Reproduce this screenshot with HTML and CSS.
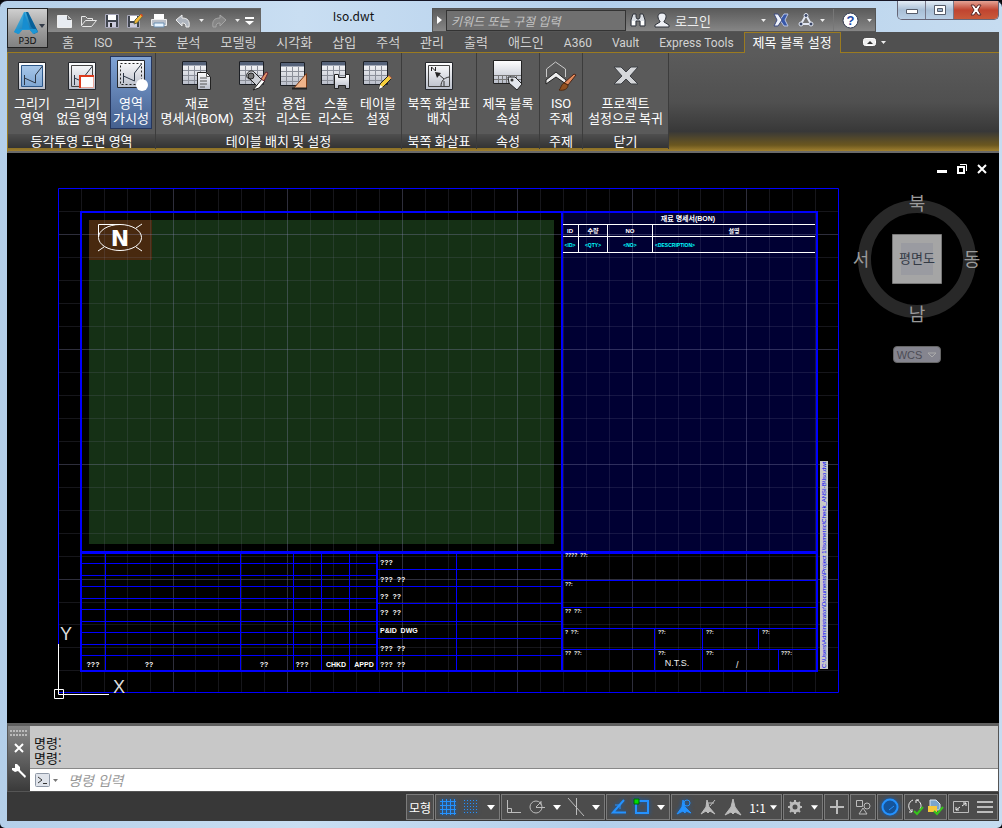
FILE: index.html
```html
<!DOCTYPE html>
<html lang="ko">
<head>
<meta charset="utf-8">
<title>Iso.dwt</title>
<link rel="stylesheet" href="styles.css">
</head>
<body>
<svg class="defs" aria-hidden="true">
  <defs>
    <linearGradient id="paper" x1="0" y1="0" x2="0" y2="1"><stop offset="0" stop-color="#fff"/><stop offset="1" stop-color="#b8bdc9"/></linearGradient>
    <linearGradient id="sky" x1="0" y1="0" x2="0" y2="1"><stop offset="0" stop-color="#a8c8ea"/><stop offset="1" stop-color="#7fa6d2"/></linearGradient>
    <linearGradient id="logo" x1="0" y1="0" x2="1" y2="1"><stop offset="0" stop-color="#4cc4f2"/><stop offset="1" stop-color="#075a96"/></linearGradient>
    <symbol id="grid-table" viewBox="0 0 32 32">
      <path d="M3.500 2.500h24v23h-24z" fill="url(#paper)" stroke="#1c1f24"/>
      <path d="M4 3h23v3.500H4z" fill="#56637a"/>
      <path d="M4 11.500h23M4 16.500h23M4 21.500h23M9.500 7v18M15.500 7v18M21.500 7v18" stroke="#8b8f99" fill="none"/>
    </symbol>
    <symbol id="sheet" viewBox="0 0 32 32">
      <path d="M2.500 2.500h27v27h-27z" fill="url(#paper)" stroke="#24272c"/>
    </symbol>
    <symbol id="caret" viewBox="0 0 8 5"><path d="M0 0h8L4 5z" fill="currentColor"/></symbol>
  </defs>
</svg>
<div class="window">
  <header class="header">
    <button class="app-button" aria-label="P3D">
      <svg width="36" height="26" viewBox="0 0 36 26"><path d="M14 2h4l10 20-4 2-4-4h-8l-4 4-4-2z" fill="url(#logo)"/><path d="M14 2l-2 17h8z" fill="#168dd0"/><path d="M16 2l2 0 10 20-7-5z" fill="#086099"/><path d="M4 22l2-3h20l2 3-5 2-3-4h-8l-3 4z" fill="#1c96d6"/><path d="M29 14h6l-3 4z" fill="#333b48"/></svg>
      <span>P3D</span>
    </button>
    <div class="title-row">
      <div class="quick-bar">
        <button aria-label="새로 만들기"><svg width="18" height="16" viewBox="0 0 18 16"><path d="M1.500 2.500h10l4 4v8h-14z" fill="#e8ecf2" stroke="#eee"/><path d="M11.500 2.500v4h4" fill="#aaa" stroke="#666"/></svg></button>
        <button aria-label="열기"><svg width="18" height="16" viewBox="0 0 18 16"><path d="M1.500 12.500v-9h4l2 2h5v2M1.500 12.500l4-5h11l-5 6h-9z" fill="#777" stroke="#e8e8e8"/></svg></button>
        <button aria-label="저장"><svg width="16" height="16" viewBox="0 0 16 16"><path d="M1.500 1.500h13v13h-13z" fill="#40454f" stroke="#aab"/><path d="M4 2h8v5H4z" fill="#fff"/><path d="M4 9h8v5H4z" fill="#ccd"/><path d="M6 10h2v4H6z" fill="#222"/></svg></button>
        <button aria-label="다른 이름으로 저장"><svg width="18" height="16" viewBox="0 0 18 16"><path d="M1.500 2.500h12v12h-12z" fill="#40454f" stroke="#aab"/><path d="M4 3h7v5H4z" fill="#fff"/><path d="M4 10h7v4H4z" fill="#ccd"/><path d="M8 11l1-4 6-6 2 2-6 7z" fill="#f3b636" stroke="#664"/><path d="M14 1l2 0 1 2-1 1z" fill="#d54b20"/></svg></button>
        <button aria-label="플롯"><svg width="18" height="16" viewBox="0 0 18 16"><path d="M4 1h10v6H4z" fill="#fff"/><path d="M1.500 6.500h15v6h-15z" fill="#b9bfc9" stroke="#eee"/><path d="M4 10h10v4H4z" fill="#e8f4ff" stroke="#6b8fb2"/></svg></button>
        <button aria-label="명령 취소"><svg width="18" height="16" viewBox="0 0 18 16"><path d="M2 7l6-5v3c6 0 8 3 7 9h-3c0-3-1-4-4-4v3z" fill="#aeb4bd" stroke="#eee"/></svg></button>
        <button class="mini" aria-label="취소 목록"><svg width="5" height="3"><use href="#caret"/></svg></button>
        <button aria-label="명령 복구"><svg width="18" height="16" viewBox="0 0 18 16"><path d="M16 7l-6-5v3C4 5 2 8 3 14h3c0-3 1-4 4-4v3z" fill="#858585" stroke="#a5a5a5"/></svg></button>
        <button class="mini" aria-label="복구 목록"><svg width="5" height="3"><use href="#caret"/></svg></button>
        <button class="mini" aria-label="빠른 실행 사용자화"><svg width="9" height="8"><path d="M0 1h9" stroke="#fff" stroke-width="2"/><path d="M0 4h9L4.500 8z" fill="#fff"/></svg></button>
      </div>
      <h1 class="doc-title">Iso.dwt</h1>
      <div class="info-center">
        <button class="info-arrow" aria-label="축소"><svg width="5" height="8"><path d="M0 0l5 4-5 4z" fill="#fff"/></svg></button>
        <input class="search" type="text" aria-label="검색" placeholder="키워드 또는 구절 입력">
        <button aria-label="찾기"><svg width="16" height="16" viewBox="0 0 16 16"><path d="M3 2h3v3l1 2h2l1-2V2h3l2 6v6h-5V9H6v5H1V8z" fill="#d9dde3" stroke="#30343c"/><path d="M2 9h3v4H2zM11 9h3v4h-3z" fill="#fff"/></svg></button>
        <button class="login"><svg width="16" height="16" viewBox="0 0 16 16"><path d="M8 1c6 0 4 7 2 8v1l5 3v2H1v-2l5-3V9C4 8 2 1 8 1z" fill="#eef0f5" stroke="#30343c"/></svg><span>로그인</span><svg width="5" height="3"><use href="#caret"/></svg></button>
        <button aria-label="Exchange"><svg width="16" height="14" viewBox="0 0 16 14"><path d="M15 1h-4L7 7l4 6h4l-3-6z" fill="#3858a8" stroke="#b9c4e5"/><path d="M1 1h4l4 6-4 6H1l3-6z" fill="#eef2fb" stroke="#3c4a80"/></svg></button>
        <button class="share" aria-label="연결"><svg width="16" height="16" viewBox="0 0 16 16"><path d="M8 3L3 12h10z" fill="none" stroke="#e2e7f2" stroke-width="2"/><g fill="#3a4666" stroke="#e2e7f2"><circle cx="8" cy="3.500" r="2"/><circle cx="3" cy="12" r="2"/><circle cx="13" cy="12" r="2"/></g></svg><svg width="5" height="3"><use href="#caret"/></svg></button>
        <button class="help" aria-label="도움말"><svg width="17" height="17" viewBox="0 0 17 17"><circle cx="8.500" cy="8.500" r="7.500" fill="#fff" stroke="#333b50"/><text x="8.500" y="13" text-anchor="middle" class="help-mark">?</text></svg><svg width="5" height="3"><use href="#caret"/></svg></button>
      </div>
      <div class="window-buttons">
        <button aria-label="최소화"><svg width="14" height="12"><path d="M1.500 5.500h11v4h-11z" fill="#fff" stroke="#555c6a"/></svg></button>
        <button aria-label="최대화"><svg width="14" height="12"><path d="M1.500 1.500h11v9h-11z" fill="#fff" stroke="#555c6a"/><path d="M4.500 4.500h5v3h-5z" fill="#9cb3cc" stroke="#555c6a"/></svg></button>
        <button class="close" aria-label="닫기"><svg width="14" height="12"><path d="M2 1h3l2 3 2-3h3L9 6l3 5H9L7 8l-2 3H2l3-5z" fill="#fff" stroke="#5b2a2a"/></svg></button>
      </div>
    </div>
    <nav class="tabs">
      <a href="#">홈</a><a href="#" lang="en">ISO</a><a href="#">구조</a><a href="#">분석</a><a href="#">모델링</a><a href="#">시각화</a><a href="#">삽입</a><a href="#">주석</a><a href="#">관리</a><a href="#">출력</a><a href="#">애드인</a><a href="#" lang="en">A360</a><a href="#" lang="en">Vault</a><a href="#" lang="en">Express Tools</a><a href="#" class="active">제목 블록 설정</a>
      <button class="tab-menu" aria-label="리본 최소화"><svg width="24" height="9" viewBox="0 0 24 9"><rect x=".5" y=".5" width="12" height="7" rx="2" fill="#eee" stroke="#fff"/><path d="M4 6h6L7 3z" fill="#333"/><path d="M18 3h5l-2.500 3z" fill="#eee"/></svg></button>
    </nav>
  </header>

  <section class="ribbon">
    <div class="panel panel-area">
      <div class="tools">
        <button class="tool"><svg width="32" height="32"><use href="#sheet"/><path d="M5.500 5.500h21v21h-21z" fill="url(#sky)" stroke="#2c5788"/><path d="M8.500 15v10M8.500 18l11 5v-8l7-9" fill="none" stroke="#2d3745"/></svg><span>그리기<br>영역</span></button>
        <button class="tool"><svg width="32" height="32"><use href="#sheet"/><path d="M5.500 5.500h21v21h-21z" fill="none" stroke="#444"/><path d="M8.500 15v10M8.500 18l11 5v-8l7-9" fill="none" stroke="#2d3745"/><path d="M14.500 16.500h13v11h-13z" fill="#fff" stroke="#e9a79b"/><path d="M14 28V16h14" fill="none" stroke="#dd3a1c" stroke-width="2"/></svg><span>그리기<br>없음 영역</span></button>
        <button class="tool selected"><svg width="32" height="32"><path d="M2.500 .500h27v27h-27z" fill="url(#paper)" stroke="#24272c"/><path d="M5.500 3.500h21v21h-21z" fill="none" stroke="#222" stroke-dasharray="2 2"/><path d="M8.500 13v10M8.500 16l11 5v-8l7-9" fill="none" stroke="#2d3745"/><circle cx="27" cy="25" r="6" fill="#fff"/></svg><span>영역<br>가시성</span></button>
      </div>
      <h2>등각투영 도면 영역</h2>
    </div>
    <div class="panel panel-table">
      <div class="tools">
        <button class="tool"><svg width="32" height="32"><use href="#grid-table" x="-2" y="-1"/><path d="M16.500 12.500h9l4 4v13h-13z" fill="url(#paper)" stroke="#222"/><path d="M25.500 12.500v4h4M19 18h7M19 21h7M19 24h7M19 27h5" fill="none" stroke="#555"/></svg><span>재료<br>명세서(BOM)</span></button>
        <button class="tool"><svg width="32" height="32"><use href="#grid-table" x="-2" y="-1"/><path d="M9 14c2-4 6-4 8-1l7 7-5 6-7-7c-3 0-4-3-3-5z" fill="#cdd0d6" stroke="#222"/><circle cx="13" cy="16" r="3" fill="#777" stroke="#222"/><path d="M15 30l9-11 3 2-6 7z" fill="#fff" stroke="#222"/><path d="M23 19l5-7 2 1-4 8z" fill="#e09468" stroke="#623"/></svg><span>절단<br>조각</span></button>
        <button class="tool"><svg width="32" height="32"><use href="#grid-table" x="-1"/><path d="M15.500 28.500l13-15v15z" fill="#f0b48a" stroke="#7b3b16"/><path d="M14 28.500h15" stroke="#222" stroke-width="2"/></svg><span>용접<br>리스트</span></button>
        <button class="tool"><svg width="32" height="32"><use href="#grid-table" x="-2" y="-1"/><path d="M14.500 14.500h4v3h7v-3h4v14h-4v-3h-7v3h-4z" fill="url(#paper)" stroke="#222"/></svg><span>스풀<br>리스트</span></button>
        <button class="tool"><svg width="32" height="32"><use href="#grid-table" x="-2" y="-1"/><path d="M17 29l1-5 9-9 3 3-9 9z" fill="#f5cf3d" stroke="#222"/><path d="M17 29l1-4 3 2z" fill="#fff"/><path d="M26 16l1-1 3 3-1 1z" fill="#d98561"/></svg><span>테이블<br>설정</span></button>
      </div>
      <h2>테이블 배치 및 설정</h2>
    </div>
    <div class="panel panel-north">
      <div class="tools"><button class="tool"><svg width="32" height="32"><use href="#sheet"/><path d="M5.500 5.500h21v21h-21z" fill="none" stroke="#444"/><path d="M8.500 11V7l4 4V7" fill="none" stroke="#222"/><path d="M21 19l-7-6M18 26c0-5 3-8 8-9M21 26v-5" fill="none" stroke="#333"/><path d="M12 12l6 1-4 5z" fill="#222"/></svg><span>북쪽 화살표<br>배치</span></button></div>
      <h2>북쪽 화살표</h2>
    </div>
    <div class="panel panel-title">
      <div class="tools"><button class="tool"><svg width="32" height="32"><path d="M1.500 .500h28v23h-28z" fill="url(#paper)" stroke="#222"/><path d="M2 15.500h27M2 19.500h27M6.500 15v8M10.500 15v8M14.500 15v8M18.500 15v8M24.500 15v8" stroke="#777"/><path d="M16 17l7 0 7 7-5 6-8-7z" fill="#e3e6ec" stroke="#222"/><circle cx="20" cy="20" r="1.500" fill="#333"/></svg><span>제목 블록<br>속성</span></button></div>
      <h2>속성</h2>
    </div>
    <div class="panel panel-iso">
      <div class="tools"><button class="tool"><svg width="32" height="32"><path d="M1.500 17V9l9-7 10 7v8" fill="none" stroke="#c9c9c9"/><path d="M1 20l10-8 10 8v4l-10-7L1 24z" fill="#eee" stroke="#222"/><path d="M19 23L29 14l2 1-8 10z" fill="#e28a5b" stroke="#4a2416"/><path d="M14 30c2-1 2-6 5-7l4 2c0 4-4 6-9 5z" fill="#91501f" stroke="#502a10"/></svg><span>ISO<br>주제</span></button></div>
      <h2>주제</h2>
    </div>
    <div class="panel panel-close">
      <div class="tools"><button class="tool"><svg width="32" height="32"><path d="M4 7h7l5 5 5-5h7l-8 9 8 8h-7l-5-5-5 5H4l8-8z" fill="#d5d7da" stroke="#3d4045"/></svg><span>프로젝트<br>설정으로 복귀</span></button></div>
      <h2>닫기</h2>
    </div>
  </section>

  <main class="canvas">
    <svg class="drawing" viewBox="7 153 992 570" preserveAspectRatio="xMinYMin meet" role="img" aria-label="제목 블록 도면">
      <path class="navy" d="M562 212h255v340H562z"/>
      <path class="green" d="M89 220h465v324H89z"/>
      <path class="brown" d="M89 220h63v40H89z"/>
      <path class="grid-minor" d="M81.500 188v505M104.500 188v505M127.500 188v505M150.500 188v505M195.500 188v505M218.500 188v505M241.500 188v505M264.500 188v505M310.500 188v505M333.500 188v505M356.500 188v505M379.500 188v505M425.500 188v505M448.500 188v505M471.500 188v505M494.500 188v505M540.500 188v505M563.500 188v505M586.500 188v505M609.500 188v505M655.500 188v505M678.500 188v505M700.500 188v505M723.500 188v505M769.500 188v505M792.500 188v505M815.500 188v505M58 211.500h780M58 257.500h780M58 280.500h780M58 303.500h780M58 326.500h780M58 372.500h780M58 395.500h780M58 418.500h780M58 441.500h780M58 487.500h780M58 510.500h780M58 533.500h780M58 556.500h780M58 602.500h780M58 624.500h780M58 647.500h780M58 670.500h780"/>
      <path class="grid-major" d="M173.500 188v505M287.500 188v505M402.500 188v505M517.500 188v505M632.500 188v505M746.500 188v505M58 234.500h780M58 349.500h780M58 464.500h780M58 579.500h780"/>
      <path class="blue-line" d="M58.500 188.500h780v504h-780zM105.500 553v117M293.500 553v117M321.500 553v117M349.500 553v117M456.500 553v117M81 563.500h296M81 575.500h296M81 586.500h296M81 609.500h296M81 621.500h296M81 644.500h296M81 655.500h296M377 569.500h185M377 586.500h185M377 603.500h185M377 621.500h185M377 638.500h185M377 655.500h185M563 607.500h253M563 628.500h253M563 649.500h253M654.500 628v42M702.500 628v42M758.500 628v21M778.500 649v21M240.500 553v117M81 598.500h296M81 632.500h296M563 580.500h253"/>
      <path class="blue-thick" d="M81 212h736v459H81zM562 212v459M377 553v118"/>
      <path class="blue-heavy" d="M81 552.500h736"/>
      <path class="white-line" d="M563 224.500h252M563 236.500h252M563 252.500h252M578.500 224v28M607.500 224v28M652.500 224v28"/>
      <g class="north"><ellipse cx="120" cy="237.500" rx="21.500" ry="13"/><path d="M98.500 237v-12.500h22M142 224l-6 4M98 251l6-4M142 251l-6-4"/><text x="120" y="246" text-anchor="middle">N</text></g>
      <g class="bom-text" text-anchor="middle">
        <text class="bom-title" x="688" y="221">재료 명세서(BON)</text>
        <text x="570" y="233">ID</text><text x="593" y="233">수량</text><text x="630" y="233">NO</text><text x="734" y="233">설명</text>
        <g class="cyan"><text x="570" y="247">&lt;ID&gt;</text><text x="593" y="247">&lt;QTY&gt;</text><text x="630" y="247">&lt;NO&gt;</text><text x="675" y="247">&lt;DESCRIPTION&gt;</text></g>
      </g>
      <g class="cell-text">
        <g text-anchor="middle"><text x="93" y="667">???</text><text x="149" y="667">??</text><text x="264" y="667">??</text><text x="302" y="667">???</text><text x="336" y="667">CHKD</text><text x="364" y="667">APPD</text></g>
        <text x="380" y="565">???</text><text x="380" y="582">??? &#160;??</text><text x="380" y="599">?? &#160;??</text><text x="380" y="615">?? &#160;??</text><text x="380" y="633">P&amp;ID &#160;DWG</text><text x="380" y="651">??? &#160;??</text><text x="380" y="667">??? &#160;??</text>
      </g>
      <g class="tiny-text">
        <text x="565" y="557">???? &#160;??:</text><text x="565" y="586">??:</text><text x="565" y="613">?? &#160;??:</text><text x="565" y="634">? &#160;??:</text><text x="565" y="655">?? &#160;??:</text>
        <text x="658" y="634">??:</text><text x="706" y="634">??:</text><text x="762" y="634">??:</text><text x="658" y="655">??:</text><text x="706" y="655">??:</text><text x="781" y="655">???:</text>
      </g>
      <text class="scale-text" x="677" y="666" text-anchor="middle">N.T.S.</text><text class="scale-text" x="736" y="668">/</text>
      <path d="M820 461h8v208h-8z" fill="#c8c8c8"/>
      <text class="path-text" transform="translate(826 668) rotate(-90)">C:\Users\Administrator\Documents\Project 1\Isometric\Check_ANSI-B\Iso.dwt</text>
      <path class="ucs" d="M58.500 644v50.500h50.500M54.500 689.500h9v9h-9z"/>
      <text class="ucs-text" x="66" y="640" text-anchor="middle">Y</text><text class="ucs-text" x="119" y="693" text-anchor="middle">X</text>
    </svg>
    <div class="doc-buttons">
      <button aria-label="도면 최소화"><svg width="10" height="10"><path d="M0 6h10v3H0z" fill="#fff"/></svg></button>
      <button aria-label="도면 복원"><svg width="10" height="10"><path d="M3 .500h6.500V7" fill="none" stroke="#fff"/><path d="M1 3h6v6H1z" fill="none" stroke="#fff" stroke-width="2"/></svg></button>
      <button aria-label="도면 닫기"><svg width="10" height="10"><path d="M1 1l8 8M9 1l-8 8" stroke="#fff" stroke-width="2"/></svg></button>
    </div>
    <div class="view-cube">
      <svg width="130" height="134" viewBox="0 0 130 134">
        <circle cx="65" cy="67" r="52.500" fill="none" stroke="#282828" stroke-width="13"/>
        <path d="M40.500 42.500h49v49h-49z" fill="#a5a5a5" stroke="#777"/><path d="M49 51h32v32H49z" fill="#9a9ba1"/>
        <g text-anchor="middle"><text class="cube-face" x="65" y="71">평면도</text><g class="compass-text"><text x="65" y="18">북</text><text x="65" y="129">남</text><text x="9" y="74">서</text><text x="120" y="74">동</text></g></g>
      </svg>
      <button class="wcs">WCS<svg width="10" height="6"><path d="M1 1h8L5 5z" fill="none" stroke="#aaa"/></svg></button>
    </div>
  </main>

  <section class="command">
    <div class="command-grip">
      <svg width="18" height="6"><path d="M0 1h18M0 5h18" stroke="#bbb" stroke-width="2" stroke-dasharray="2 1"/></svg>
      <button aria-label="명령행 닫기"><svg width="10" height="10"><path d="M1 1l8 8M9 1l-8 8" stroke="#fff" stroke-width="2"/></svg></button>
      <button class="wrench" aria-label="사용자화"><svg width="16" height="16" viewBox="0 0 16 16"><path d="M4 1l0 4-3 0 0 2 3 2 3-1 7 7 1-2-6-6 0-3-3-3z" fill="#fff"/></svg></button>
    </div>
    <div class="command-main">
      <p class="history">명령:<br>명령:</p>
      <div class="prompt">
        <button aria-label="최근 명령"><svg width="23" height="16" viewBox="0 0 23 16"><rect x=".5" y="1.500" width="14" height="13" rx="1" fill="#dfe3ea" stroke="#8f98a6"/><path d="M3 5l4 3-4 3M8 11.500h4" fill="none" stroke="#333"/><path d="M18 7h5l-2.500 3z" fill="#777"/></svg></button>
        <input type="text" aria-label="명령" placeholder="명령 입력">
      </div>
    </div>
  </section>

  <footer class="status">
    <div class="group g-model"><button>모형</button></div>
    <div class="group g-grid">
      <button class="on" aria-label="그리드"><svg width="16" height="16"><path d="M0 2.500h16M0 6.500h16M0 10.500h16M0 14.500h16M2.500 0v16M6.500 0v16M10.500 0v16M14.500 0v16"/></svg></button>
      <button class="on" aria-label="스냅"><svg width="16" height="16"><path d="M1 1.500h15M1 4.500h15M1 7.500h15M1 10.500h15M1 13.500h15" stroke-dasharray="1 2"/></svg></button>
      <button aria-label="스냅 메뉴"><svg width="8" height="5"><use href="#caret"/></svg></button>
    </div>
    <div class="group g-track">
      <button aria-label="직교"><svg width="16" height="16"><path d="M1.500 1v12.500H15M1.500 9.500h4v4" /></svg></button>
      <button aria-label="극좌표"><svg width="16" height="16"><circle cx="7" cy="8" r="6"/><path d="M7 8.500h9M7 8l5-5M12 2v4"/></svg></button>
      <button aria-label="극좌표 메뉴"><svg width="8" height="5"><use href="#caret"/></svg></button>
      <button aria-label="등각투영"><svg width="18" height="20"><path d="M9.500 1v17M1 1l16 18"/></svg></button>
      <button aria-label="등각투영 메뉴"><svg width="8" height="5"><use href="#caret"/></svg></button>
    </div>
    <div class="group g-osnap">
      <button class="on" aria-label="객체 스냅 추적"><svg width="17" height="16"><path d="M14 1L3 13.500h13" stroke-width="2"/><path d="M5 6h5v4"/></svg></button>
      <button class="on" aria-label="객체 스냅"><svg width="18" height="18"><path d="M3 3h12v12H3z" stroke-width="2"/><path d="M1 1h5v5H1z" fill="#0d0" stroke="#060"/></svg></button>
      <button aria-label="객체 스냅 메뉴"><svg width="8" height="5"><use href="#caret"/></svg></button>
    </div>
    <div class="group g-anno">
      <button class="on" aria-label="주석 가시성"><svg width="18" height="18"><path class="solid" d="M8 2l2 7 6 6-5-2-1 2-2-2-6 3 5-7z"/><circle cx="12" cy="5" r="3"/></svg></button>
      <button aria-label="자동 축척"><svg width="18" height="18"><path class="solid" d="M8 2l2 7 6 7-5-3-2 2-2-2-5 3 5-7z"/><path d="M9 5h6M11 8l5-6"/></svg></button>
      <button aria-label="주석 축척"><svg width="18" height="18"><path class="solid" d="M9 1l2 8 6 8-6-3-2 2-2-2-6 3 6-8z"/></svg></button>
      <button class="scale">1:1 <svg width="7" height="5"><use href="#caret"/></svg></button>
    </div>
    <div class="group g-gear">
      <button aria-label="작업공간"><svg width="16" height="16"><circle cx="8" cy="8" r="4" stroke-width="3"/><path d="M8 1v3M8 12v3M1 8h3M12 8h3M3 3l2 2M11 11l2 2M13 3l-2 2M5 11l-2 2" stroke-width="2"/></svg></button>
      <button aria-label="작업공간 메뉴"><svg width="7" height="5"><use href="#caret"/></svg></button>
    </div>
    <div class="group g-plus"><button aria-label="주석 감시"><svg width="16" height="16"><path d="M8 1v14M1 8h14" stroke-width="2"/></svg></button></div>
    <div class="group g-shapes"><button aria-label="객체 분리"><svg width="16" height="18"><path d="M1.500 2.500h6v6h-6zM4 16h8l-4-6z"/><circle cx="12" cy="8" r="3"/></svg></button></div>
    <div class="group g-perf"><button class="on" aria-label="하드웨어 가속"><svg width="18" height="18"><circle cx="9" cy="9" r="7.500" fill="#14549b" stroke-width="2"/><path d="M8 12l5-4"/></svg></button></div>
    <div class="group g-sync">
      <button aria-label="동기화"><svg width="17" height="18"><path d="M6 2C1 4 0 10 5 14M10 2c4 2 5 6 3 9M5 11v3H2M9 5V2h3" stroke="#eee"/><path d="M7 13l3 3 6-7" stroke="#36c51c" stroke-width="2"/></svg></button>
      <button aria-label="프로젝트"><svg width="17" height="18"><path d="M3 2h6l4 4v6H3z" fill="#7aa5cc" stroke="#d7e5f2"/><path d="M1 8h9v6H1z" fill="#f5c83c" stroke="none"/><path d="M7 13l3 3 6-7" stroke="#36c51c" stroke-width="2"/></svg></button>
    </div>
    <div class="group g-full">
      <button aria-label="화면 정리"><svg width="16" height="14"><path d="M.500 1.500h15v11H.500z" stroke-width="1"/><path d="M3 10l4-3M9 6l4-3M3 7v3h3M10 3h3v3" stroke="#eee"/></svg></button>
      <button aria-label="사용자화 메뉴 열기"><svg width="16" height="14"><path d="M0 2h16M0 7h16M0 12h16" stroke-width="2"/></svg></button>
    </div>
  </footer>
</div>
</body>
</html>
```
FILE: styles.css
```css
* { box-sizing: border-box; }
body { margin: 0; background: #08080c; font: 12px/15px "Noto Sans CJK KR", "Noto Sans", sans-serif; color: #eee; }
button { font: inherit; color: inherit; background: none; border: 0; padding: 0; margin: 0; display: flex; align-items: center; justify-content: center; }
h1, h2, p { margin: 0; font: inherit; }
svg { display: block; flex: none; overflow: visible; }
input { border: 0; font: inherit; min-width: 0; outline: 0; }
.defs { position: absolute; width: 0; height: 0; }

.window { display: flex; flex-direction: column; height: 100vh; min-height: 480px; padding: 0 3px 7px 7px; background: linear-gradient(90deg, #b4cfe9, #c9def2 30%, #b3cfeb 60%, #c6dcf0); border-top: 1px solid #151525; border-radius: 7px 7px 5px 5px; }

.header { display: grid; grid-template-columns: 41px 1fr; grid-template-rows: 31px 20px; flex: none; background: linear-gradient(transparent 31px, #505050 31px); }
.app-button { grid-row: 1 / 3; margin-top: 7px; height: 40px; flex-direction: column; background: linear-gradient(#cfcfcf, #999 60%, #828282); border: 1px solid #222; color: #111; font: 9px/10px "DejaVu Sans", sans-serif; }
.title-row { display: flex; min-width: 0; }
.quick-bar { display: flex; align-items: center; gap: 6px; width: 213px; margin-top: 7px; padding-left: 8px; background: linear-gradient(#5b5b5b, #8a8a8a); border: 1px solid #666; border-left: 0; border-bottom: 0; }
.quick-bar .mini { width: 6px; }
.doc-title { flex: 1; padding: 7px 0 0 14px; color: #111; text-align: center; line-height: 16px; }
.info-center { display: flex; align-items: center; width: 444px; margin-top: 7px; background: linear-gradient(#5b5b5b, #868686); border: 1px solid #555; }
.info-center > button { width: 24px; height: 100%; }
.info-center .info-arrow { width: 13px; }
.search { width: 180px; height: 21px; padding: 0 4px; background: #707070; border: 1px solid #333; color: #eee; font-style: italic; }
.search::placeholder { color: #c4c4c4; opacity: 1; }
.info-center .login { width: 119px; justify-content: flex-start; gap: 5px; padding: 0 3px 0 4px; font-size: 13px; }
.login span { flex: 1; text-align: left; }
.info-center .share { width: 36px; gap: 6px; margin-right: 4px; }
.info-center .help { flex: 1; gap: 8px; padding-left: 4px; border-left: 1px solid #777; }
.help-mark { font: bold 13px "Liberation Sans", sans-serif; fill: #1e49a8; }
.window-buttons { display: flex; height: 19px; margin-left: 21px; border: 1px solid #667; border-top: 0; border-radius: 0 0 5px 5px; overflow: hidden; }
.window-buttons button { width: 28px; background: linear-gradient(#e4edf6, #a9bfd6 50%, #b9cfe5); border-right: 1px solid #778; }
.window-buttons .close { width: 44px; background: linear-gradient(#e5a395, #c04430 50%, #c85a3a); border: 0; }
.tabs { display: flex; align-items: stretch; color: #d2d2d2; white-space: nowrap; padding-left: 4px; font-size: 13px; }
.tabs a { padding: 1px 10px 0; color: inherit; text-decoration: none; line-height: 17px; }
.tabs a[lang="en"] { padding-top: 3px; font-family: Roboto, sans-serif; font-size: 12px; }
.tabs .active { color: #fff; background: #5b5b5b; border: 1px solid #9b7b20; border-bottom: 0; padding: 0 8px; margin-bottom: -1px; position: relative; }
.tab-menu { margin-left: 22px; }

.ribbon { display: flex; flex: none; height: 101px; border-top: 1px solid #9b7b20; border-left: 1px solid #9b7b20; border-bottom: 2px solid #6a6a6a; background: linear-gradient(#5b5b5b, #505050 50%, #383838 80%, #6b571f 94%, #a08030); font-family: Roboto, "Noto Sans CJK KR", sans-serif; font-size: 13px; color: #fff; }
.panel { display: flex; flex-direction: column; border-right: 1px solid #3c3c3c; background: #5a5a5a; margin-bottom: 2px; }
.panel h2 { height: 15px; line-height: 15px; text-align: center; white-space: nowrap; background: linear-gradient(#4f4f4f, #333); border-bottom: 1px solid #8e7226; }
.tools { flex: 1; display: grid; padding-top: 3px; }
.tool { flex-direction: column; justify-content: flex-start; gap: 4px; height: 73px; padding-top: 3px; white-space: nowrap; border: 1px solid transparent; }
.tool span { text-align: center; }
.selected { background: linear-gradient(#7fa3d6, #45608f); border-color: #26365c; }
.panel-area { width: 148px; }
.panel-area .tools { grid-template-columns: 48px 52px 42px; column-gap: 0; }
.panel-area .selected { margin-left: 2px; margin-right: -2px; }
.panel-table { width: 246px; }
.panel-table .tools { grid-template-columns: 76px 38px 42px 42px 42px; padding-left: 3px; }
.panel-north { width: 75px; }
.panel-title { width: 63px; }
.panel-iso { width: 43px; }
.panel-close { width: 86px; }

.canvas { position: relative; flex: 1; min-height: 0; background: #000; overflow: hidden; }
.drawing { width: 100%; height: 100%; }
.drawing path { fill: none; }
.drawing .navy { fill: #000033; }
.drawing .green { fill: #153015; }
.drawing .brown { fill: #48290f; }
.drawing path[fill] { fill: #c8c8c8; }
.grid-minor { stroke: #8080a0; stroke-opacity: .17; }
.grid-major { stroke: #8888b0; stroke-opacity: .34; }
.blue-line { stroke: #00f; }
.blue-thick { stroke: #00f; stroke-width: 2; }
.blue-heavy { stroke: #00f; stroke-width: 3; }
.white-line, .ucs { stroke: #fff; }
.north { fill: none; stroke: #fff; }
.north text { font: bold 22px "DejaVu Sans", sans-serif; fill: #fff; stroke: none; }
.bom-text { font: bold 6px "Liberation Sans", "Noto Sans CJK KR", sans-serif; fill: #fff; }
.bom-title { font-size: 7px; }
.cyan { fill: #0ff; font-size: 5px; }
.cell-text { font: bold 7px "Liberation Sans", sans-serif; fill: #fff; }
.tiny-text { font: bold 5px "Liberation Sans", sans-serif; fill: #fff; }
.scale-text { font: 9px "Liberation Sans", sans-serif; fill: #eee; }
.path-text { font: 6px "Liberation Sans", sans-serif; fill: #00f; }
.ucs-text { font: 18px "Liberation Sans", sans-serif; fill: #ddd; }
.doc-buttons { position: absolute; top: 11px; right: 12px; display: flex; gap: 10px; }
.view-cube { position: absolute; top: 39px; right: 17px; display: flex; flex-direction: column; align-items: center; gap: 20px; }
.cube-face { font-size: 13px; fill: #333a45; }
.compass-text { font-size: 18px; fill: #9a9a9a; }
.wcs { width: 48px; height: 17px; gap: 5px; border: 1px solid #666; border-radius: 4px; background: #85858f; color: #4c4c55; font: 11px/14px "Liberation Sans", sans-serif; }

.command { display: flex; flex: none; height: 69px; border: 1px solid #555; border-top: 3px solid #606060; }
.command-grip { display: flex; flex-direction: column; align-items: center; gap: 7px; width: 22px; padding-top: 4px; background: linear-gradient(#888, #3a3a3a); }
.wrench { margin-top: 3px; }
.command-main { flex: 1; display: flex; flex-direction: column; }
.history { flex: 1; padding: 9px 0 0 4px; background: #c8c8c8; color: #111; border-bottom: 1px solid #888; font-size: 13px; line-height: 15px; }
.prompt { display: flex; align-items: center; gap: 10px; height: 22px; padding-left: 5px; background: #fff; }
.prompt input { flex: 1; height: 20px; font-size: 14px; font-style: italic; padding: 0; color: #222; }
.prompt input::placeholder { color: #999; opacity: 1; }

.status { display: flex; flex: none; justify-content: flex-end; gap: 1px; height: 29px; padding: 2px 1px 1px 0; background: #383838; }
.group { display: flex; height: 26px; background: #4c4c4c; border: 1px solid #7b7b7b; color: #fff; }
.group button { flex: 1 1 24px; }
.group svg { fill: none; stroke: #bcbcbc; }
.group svg:has(use) { stroke: none; color: #fff; }
.group .solid { fill: #bcbcbc; }
.group .on svg { stroke: #2492ff; filter: drop-shadow(0 0 2px #0b5fc0); }
.group .on .solid { fill: #2492ff; }
.group button[aria-label$="메뉴"] { flex: 0 0 16px; }
.group .scale { flex: 0 0 36px; gap: 4px; }
.g-model { width: 28px; }
.g-grid { width: 65px; }
.g-track { width: 104px; }
.g-osnap { width: 64px; }
.g-anno { width: 111px; }
.g-gear { width: 40px; }
.g-plus { width: 25px; }
.g-shapes, .g-perf { width: 26px; }
.g-sync { width: 43px; }
.g-full { width: 50px; }
```
